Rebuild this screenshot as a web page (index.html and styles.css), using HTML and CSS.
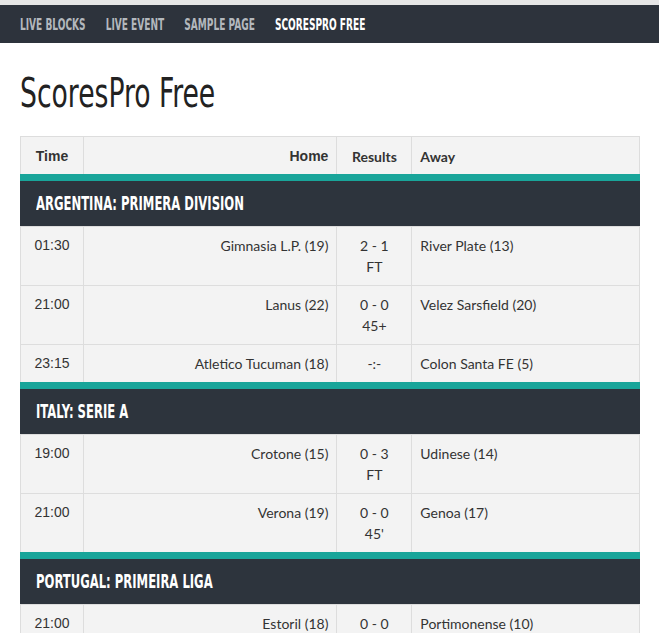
FILE: index.html
```html
<!DOCTYPE html>
<html lang="en">
<head>
<meta charset="utf-8">
<title>ScoresPro Free</title>
<link rel="stylesheet" href="styles.css">
</head>
<body>
<div class="topstrip"></div>
<nav class="nav">
  <div class="nav-list">
    <a class="nav-item" href="#">Live Blocks</a>
    <a class="nav-item" href="#">Live Event</a>
    <a class="nav-item" href="#">Sample Page</a>
    <a class="nav-item active" href="#">ScoresPro Free</a>
  </div>
</nav>
<main class="content">
  <h1 class="title"><span class="title-text">ScoresPro Free</span></h1>
  <table class="scores">
    <colgroup>
      <col class="c-time"><col class="c-home"><col class="c-res"><col class="c-away">
    </colgroup>
    <thead>
      <tr>
        <th class="time th-arial">Time</th>
        <th class="home th-arial">Home</th>
        <th class="res">Results</th>
        <th class="away">Away</th>
      </tr>
    </thead>
    <tbody>
      <tr class="league"><th colspan="4"><span class="league-name">Argentina: Primera Division</span></th></tr>
      <tr><td class="time">01:30</td><td class="home">Gimnasia L.P. (19)</td><td class="res">2 - 1<br>FT</td><td class="away">River Plate (13)</td></tr>
      <tr><td class="time">21:00</td><td class="home">Lanus (22)</td><td class="res">0 - 0<br>45+</td><td class="away">Velez Sarsfield (20)</td></tr>
      <tr><td class="time">23:15</td><td class="home">Atletico Tucuman (18)</td><td class="res">-:-</td><td class="away">Colon Santa FE (5)</td></tr>
    </tbody>
    <tbody>
      <tr class="league"><th colspan="4"><span class="league-name">Italy: Serie A</span></th></tr>
      <tr><td class="time">19:00</td><td class="home">Crotone (15)</td><td class="res">0 - 3<br>FT</td><td class="away">Udinese (14)</td></tr>
      <tr><td class="time">21:00</td><td class="home">Verona (19)</td><td class="res">0 - 0<br>45'</td><td class="away">Genoa (17)</td></tr>
    </tbody>
    <tbody>
      <tr class="league"><th colspan="4"><span class="league-name">Portugal: Primeira Liga</span></th></tr>
      <tr><td class="time">21:00</td><td class="home">Estoril (18)</td><td class="res">0 - 0</td><td class="away">Portimonense (10)</td></tr>
    </tbody>
  </table>
</main>
</body>
</html>
```

FILE: styles.css
```css
html, body {
  margin: 0;
  padding: 0;
  background: #ffffff;
}
body {
  font-family: Lato, "Open Sans", sans-serif;
  font-size: 14px;
  line-height: 21px;
  color: #333333;
}
.topstrip {
  height: 5px;
  background: #e6e6e6;
}
.nav {
  box-sizing: border-box;
  height: 38px;
  background: #2d333c;
  display: flex;
  align-items: center;
  padding: 3px 20px 0 20px;
}
.nav-list {
  display: flex;
  gap: 30px;
  transform: scaleX(0.67);
  transform-origin: left center;
  white-space: nowrap;
}
.nav-item {
  font-family: "DejaVu Sans Condensed", "DejaVu Sans", sans-serif;
  font-size: 15px;
  font-weight: 700;
  text-transform: uppercase;
  color: #b3b8bd;
  text-decoration: none;
}
.nav-item.active {
  color: #ffffff;
}
.content {
  padding: 0 20px;
}
.title {
  font-family: "DejaVu Sans Condensed", "DejaVu Sans", sans-serif;
  font-weight: 400;
  font-size: 40px;
  line-height: 50px;
  color: #222222;
  margin: 0 0 18px 0;
  padding-top: 25px;
  white-space: nowrap;
}
.title-text {
  display: inline-block;
  transform: scaleX(0.74);
  transform-origin: left center;
}
.scores {
  width: 620px;
  border-collapse: collapse;
  background: #f3f3f3;
}
.c-time { width: 63px; }
.c-home { width: 254px; }
.c-res { width: 75px; }
.c-away { width: 228px; }
.scores th, .scores td {
  border: 1px solid #dddddd;
  padding: 8px 8px;
  vertical-align: top;
}
.scores thead th {
  font-weight: 700;
  padding: 9px 8px 7px 8px;
}
.th-arial, .scores td.time {
  font-family: "Liberation Sans", Arial, sans-serif;
}
.time, .res { text-align: center; }
.home { text-align: right; }
.away { text-align: left; }
.scores tr.league th {
  background: #2d343d;
  border-top: 7px solid #19a59a;
  border-left: 1px solid #2d343d;
  border-right: 1px solid #2d343d;
  color: #ffffff;
  text-align: left;
  text-transform: uppercase;
  font-family: "DejaVu Sans Condensed", "DejaVu Sans", sans-serif;
  font-weight: 700;
  font-size: 19px;
  line-height: 28px;
  padding: 8px 15px 9px 15px;
  white-space: nowrap;
}
.league-name {
  display: inline-block;
  transform: scaleX(0.68);
  transform-origin: left center;
}
```
